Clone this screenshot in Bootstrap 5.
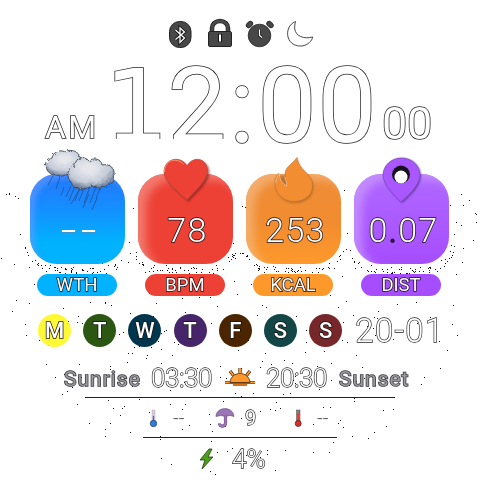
<!DOCTYPE html>
<html lang="en">
<head>
<meta charset="utf-8">
<meta name="viewport" content="width=device-width, initial-scale=1">
<title>Watch face</title>
<link href="https://cdn.jsdelivr.net/npm/bootstrap@5.3.0/dist/css/bootstrap.min.css" rel="stylesheet">
<style>
body{margin:0;background:#fff;font-family:Roboto,sans-serif;overflow:hidden}
.face{width:480px;height:480px;line-height:1;isolation:isolate;opacity:.999;will-change:opacity}
.specks{inset:0;z-index:-1}
svg{display:block;flex:none}
.outl{color:#fff;-webkit-text-stroke:1.5px #222;paint-order:stroke fill;white-space:nowrap}
.status{height:55px;padding:15px 0 0 160px}
.clock{height:93px;padding-left:45px}
.ampm{font-size:32px;width:61px;letter-spacing:2.4px;padding-top:56px;font-weight:400}
.digits{font-size:105px;height:93px;width:272px}
.digits span{display:block;width:60px;line-height:105px;height:105px;margin-top:-1px;text-align:center}
.digits .cut{position:relative}
.digits .cut::after{content:"";position:absolute;left:0;right:0;top:85px;height:4px;background:#fff}
.digits .one{font-family:"DejaVu Sans",sans-serif;font-size:102px;width:61px;text-indent:-2px}
.digits .sep{width:30px}
.secs{font-size:45px;letter-spacing:-.3px;padding-top:46px}
.tiles{padding:26px 0 0 30px;gap:13px;height:154px}
.tile{width:95px}
.tilebody{width:95px;height:90px;border-radius:27px;font-size:34px;font-weight:300;letter-spacing:1.3px;padding:39px 0 0 4px}
.tilebody .outl,.pill .outl{-webkit-text-stroke-color:#1b1014}
.tile svg{top:-29px;left:0;z-index:1}
.pill{width:80px;height:22px;border-radius:11px;margin:10px 0 0 7px;font-size:18.5px}
.wth .tilebody{background:linear-gradient(#2378ff,#168cff 35%,#00b2ff 76%);box-shadow:inset 5px 5px 5px #6699ff99}
.bpm .tilebody{background:#ee4135;box-shadow:inset 8px 6px 9px #f69287b0}
.kcal .tilebody{background:linear-gradient(#ef8c37,#f28c30 55%,#fd992b);box-shadow:inset 8px 6px 9px #f6b77ec0}
.dist .tilebody{background:linear-gradient(#b069ff,#a64dff);box-shadow:inset 8px 6px 9px #ca98ffc0}
.wth .pill{background:#00b2ff}.bpm .pill{background:#ee4135}.kcal .pill{background:#fd992b}.dist .pill{background:#a64dff}
.tilebody .dashes{font-family:"DejaVu Sans",sans-serif;font-size:50px;font-weight:200;letter-spacing:2px;margin-top:-10px;-webkit-text-stroke:1px #6c84a0}
.week{height:57px;padding:0 0 0 38px;gap:12.2px}
.day{width:33px;height:33px;font-size:22px;font-weight:500;border-radius:50%;flex:none}
.day .outl{-webkit-text-stroke-color:#111}
.date{font-size:33px;font-weight:300;letter-spacing:1.3px;margin-left:1px}
.date,.hhmm,.pct,.uv{-webkit-text-stroke-width:1.3px}
.sun{height:38px;padding-left:64px}
.word{font-size:21px;font-weight:400;letter-spacing:1px;color:#9a9aa0;-webkit-text-stroke:1.6px #39393e;paint-order:stroke fill;padding-top:3px}
.hhmm{font-size:26px;font-weight:300;letter-spacing:-.4px}
.rule{height:1px;background:#222;margin:0 auto;flex:none}
.temps{height:39px;padding-left:145px}
.none{font-size:20px;color:#555;font-weight:300}
.uv{font-size:20px}
.batt{height:42px;padding-left:198px}
.pct{font-size:26px;font-weight:300}
</style>
<script src="https://cdn.jsdelivr.net/npm/bootstrap@5.3.0/dist/js/bootstrap.bundle.min.js"></script>
</head>
<body>
<main class="face position-relative d-flex flex-column">
<svg class="specks position-absolute" id="specks" width="480" height="480" shape-rendering="crispEdges"></svg>

<header class="status d-flex">
<svg width="40" height="36" viewBox="160 15 40 36"><rect x="169.5" y="21.5" width="21.500" height="26" rx="10" fill="#484848" stroke="#222"/><path d="M175.500 30l9 8-4.500 4.500V28l4.500 4-9 7.500" fill="none" stroke="#111" stroke-width="3"/><path d="M175.500 30l9 8-4.500 4.500V28l4.500 4-9 7.500" fill="none" stroke="#fff" stroke-width="1.300"/></svg>
<svg width="40" height="36" viewBox="200 15 40 36"><path d="M212 32v-4a8 7 0 0 1 16 0v4" fill="none" stroke="#222" stroke-width="4.500"/><path d="M212 32v-4a8 7 0 0 1 16 0v4" fill="none" stroke="#484848" stroke-width="3"/><rect x="208.500" y="31.500" width="23" height="15" rx="1.500" fill="#484848" stroke="#222"/><path d="M220 34v8" stroke="#111" stroke-width="4"/><path d="M220 34.500v7" stroke="#fff" stroke-width="2"/></svg>
<svg width="40" height="36" viewBox="240 15 40 36"><g fill="#484848" stroke="#222" stroke-width=".8"><ellipse cx="249.500" cy="24.500" rx="3.800" ry="2.600" transform="rotate(-42 249.500 24.500)"/><ellipse cx="270" cy="24.500" rx="3.800" ry="2.600" transform="rotate(42 270 24.500)"/><circle cx="259.500" cy="35.500" r="11.300"/></g><path d="M259.500 29.500v6l2.500 2" fill="none" stroke="#111" stroke-width="3"/><path d="M259.500 29.500v6l2.500 2" fill="none" stroke="#fff" stroke-width="1.300"/></svg>
<svg width="40" height="36" viewBox="280 15 40 36"><path d="M295.500 21.500C289 24 286.500 31 288 37c2 7 8 9.500 14 9 6-1 10-5 10.700-9-9 2.500-17-1-18-8-.2-3 .3-5 .8-7.500z" fill="#fff" stroke="#333" stroke-width=".9"/></svg>
</header>

<section class="clock d-flex align-items-start">
<div class="ampm outl">AM</div>
<div class="digits d-flex outl"><span class="one cut">1</span><span class="cut">2</span><span class="sep">:</span><span>0</span><span>0</span></div>
<div class="secs outl ms-1">00</div>
</section>

<section class="tiles d-flex">
<article class="tile wth position-relative">
<svg class="position-absolute" width="95" height="70" viewBox="30 145 95 70"><defs><radialGradient id="cl" cx=".45" cy=".35" r=".6"><stop offset=".2" stop-color="#e6e7ec"/><stop offset=".75" stop-color="#c3cbd8"/><stop offset="1" stop-color="#7988a0"/></radialGradient><filter id="rough" x="-10%" y="-10%" width="120%" height="120%"><feTurbulence baseFrequency=".16" numOctaves="3" seed="4"/><feDisplacementMap in="SourceGraphic" scale="4"/></filter></defs>
<path d="M53 176l-5 9m12-8l-4 12m8-2l-3 9m10-10l-5 11m10-14l-7 18m12-16l-6 16m11-18l-7 18m13-20l-8 22m15-24l-9 24m14-26l-8 22m12-24l-4 12M79 190l-8 14m18-10l-6 14m14-10l-5 12" fill="none" stroke="#274f8c" stroke-opacity=".75" stroke-width="1"/>
<g filter="url(#rough)" fill="url(#cl)" stroke="#303743" stroke-width=".8" transform="translate(0 -1)"><path d="M51 174c-8-2-7-14 0-16 1-6 8-9 13-6 6-4 15 0 15 6 6 1 7 8 5 11-3 7-13 8-18 5-4 3-10 3-15 0z"/><path d="M70 182c-6-5-3-16 4-16 0-9 9-11 14-5 4-4 13-2 13 4 8-2 13 4 12 9 2 6-1 10-6 10-4 5-12 5-16 2-8 5-19 4-21-4z"/></g></svg>
<div class="tilebody d-flex justify-content-center"><span class="outl dashes">--</span></div>
<div class="pill d-flex align-items-center justify-content-center"><span class="outl">WTH</span></div>
</article>
<article class="tile bpm position-relative">
<svg class="position-absolute" width="95" height="70" viewBox="138 145 95 70"><path d="M187 201c-7-7-22-18-23-28 0-15 17-17 23-6 6-11 22-8 21 6-1 9-14 20-21 28z" fill="#791e19" opacity=".65" transform="translate(1.500 1)" style="filter:blur(1px)"/><path d="M187 200c-7-7-23-18-23-28 0-14 17-17 23-6 6-11 21-8 20.500 6-1 9-13 20-20.500 28z" fill="#ee4135" stroke="#a94b3f" stroke-width=".7"/><path d="M164.500 172c0-12 12-15 19-8" fill="none" stroke="#ffa47c" stroke-width=".8"/></svg>
<div class="tilebody d-flex justify-content-center"><span class="outl">78</span></div>
<div class="pill d-flex align-items-center justify-content-center"><span class="outl">BPM</span></div>
</article>
<article class="tile kcal position-relative">
<svg class="position-absolute" width="95" height="70" viewBox="246 145 95 70"><path d="M297 157.500c1 13 16 16 15.500 28 0 10-8 16-18.500 16-11 0-19-8-19-18 0-6 2-9 4-10l10 1c0-6 3-11 8-17z" fill="#9d5c20" opacity=".6" transform="translate(1 1.500)" style="filter:blur(1px)"/><path d="M297 157.500c1 13 16 16 15.500 28 0 10-8 16-18.500 16-11 0-19-8-19-18 0-6 2-9 4-10 1 6 3 10 7 12 2-3-1-7-1-11 0-8 7-10 12-17z" fill="#f28d31" stroke="#b97032" stroke-width=".6"/><path d="M276 183c0-5 2-8 3.500-9 0 6 3 10 7 12 1-3-1-6-1.500-9" fill="none" stroke="#f8bd86"/></svg>
<div class="tilebody d-flex justify-content-center"><span class="outl">253</span></div>
<div class="pill d-flex align-items-center justify-content-center"><span class="outl">KCAL</span></div>
</article>
<article class="tile dist position-relative">
<svg class="position-absolute" width="95" height="70" viewBox="354 145 95 70"><path d="M401 202c-6-6-18-18-18-27a18 17 0 0 1 37 0c0 10-12 21-19 27z" fill="#4c267c" opacity=".7" transform="translate(1 1)" style="filter:blur(1px)"/><path d="M401 202c-6-6-18-17-18-27a18.500 17 0 0 1 37 0c0 10-12 21-19 27z" fill="#a957ff" stroke="#7547ad" stroke-width=".7"/><circle cx="401" cy="174.500" r="9" fill="#17111e"/><circle cx="401" cy="177" r="6.500" fill="#fff"/></svg>
<div class="tilebody d-flex justify-content-center"><span class="outl">0<span style="color:#33145c">.</span>07</span></div>
<div class="pill d-flex align-items-center justify-content-center"><span class="outl">DIST</span></div>
</article>
</section>

<section class="week d-flex align-items-center">
<div class="day d-flex align-items-center justify-content-center" style="background:#fff935"><span class="outl">M</span></div>
<div class="day d-flex align-items-center justify-content-center" style="background:#2b5713"><span class="outl">T</span></div>
<div class="day d-flex align-items-center justify-content-center" style="background:#00364d"><span class="outl">W</span></div>
<div class="day d-flex align-items-center justify-content-center" style="background:#46256a"><span class="outl">T</span></div>
<div class="day d-flex align-items-center justify-content-center" style="background:#4b2500"><span class="outl">F</span></div>
<div class="day d-flex align-items-center justify-content-center" style="background:#124647"><span class="outl">S</span></div>
<div class="day d-flex align-items-center justify-content-center" style="background:#772629"><span class="outl">S</span></div>
<div class="date outl">20-01</div>
</section>

<section class="sun d-flex align-items-center">
<div class="word" style="width:87px">Sunrise</div>
<div class="hhmm outl" style="width:73px">03:30</div>
<svg width="32" height="24" viewBox="224 366 32 24"><g stroke="#3c2208" stroke-width="3.200"><path d="M225 382.500h30M240 368v5M230 371l3.500 4.500M250 371l-3.500 4.500"/></g><g stroke="#ff982c" stroke-width="2"><path d="M225 382.500h30M240 368v5M230 371l3.500 4.500M250 371l-3.500 4.500"/></g><path d="M230 382.500c1-12 19-12 20 0z" fill="#ff982c" stroke="#3c2208" stroke-width=".8"/><path d="M233 385h14" stroke="#d96e13" stroke-width="2"/></svg>
<div class="hhmm outl" style="width:73px;margin-left:10px">20:30</div>
<div class="word">Sunset</div>
</section>
<div class="rule" style="width:310px"></div>
<section class="temps d-flex align-items-center">
<svg width="16" height="22" viewBox="145 406 16 22"><rect x="152" y="409" width="3" height="14" fill="#dacce0" stroke="#a99aac" stroke-width=".4"/><path d="M153.500 415v8" stroke="#2878dd" stroke-width="1.300"/><circle cx="153.500" cy="422.500" r="3.200" fill="#277fe5" stroke="#25384f" stroke-width=".7"/></svg>
<div class="none" style="width:54px;padding-left:12px">--</div>
<svg width="22" height="22" viewBox="215 406 22 22"><path d="M216 415.500c0-10 17-11 18 0l-4-1-5 1-4-1z" fill="#9b75b6" stroke="#4a3658" stroke-width=".5"/><path d="M225.500 414v8c0 4-6 4-6 .5" fill="none" stroke="#6f4d8a" stroke-width="3.200"/><path d="M225.500 414v8c0 4-6 4-6 .5" fill="none" stroke="#9b75b6" stroke-width="2.200"/></svg>
<div class="uv outl" style="width:53px;padding-left:8px">9</div>
<svg width="16" height="22" viewBox="290 406 16 22"><rect x="296.500" y="409" width="3.500" height="14" fill="#8e7a80" stroke="#55474c" stroke-width=".5"/><path d="M298.200 412v10" stroke="#e93c32" stroke-width="2"/><circle cx="298.200" cy="422.500" r="3" fill="#d72f2b" stroke="#501d1d" stroke-width=".7"/></svg>
<div class="none" style="padding-left:11px">--</div>
</section>
<div class="rule" style="width:194px"></div>
<section class="batt d-flex align-items-center">
<svg width="34" height="24" viewBox="198 445 34 24"><path d="M209 447l-9 11h5l-3 9 11-12h-5l4-8z" fill="#4ba01b" stroke="#1c3d0b" stroke-width=".8"/></svg>
<div class="pct outl">4%</div>
</section>
</main>
<script>
// Dithered halo: sparse single-pixel specks, denser under the tiles.
let seed = 977;
const rnd = () => (seed = (seed * 16807) % 2147483647) / 2147483647;
let d = '';
const put = (x, y) => { d += `M${x | 0} ${y | 0}h1v1h-1z`; };
for (let i = 0; i < 470; i++) {
  const x = rnd() * 480, y = 190 + rnd() * 288, r = Math.hypot(x - 240, y - 236);
  if (r < 241) put(x, y);
}
for (let c = 0; c < 4; c++) for (let i = 0; i < 60; i++) {
  // follows the rounded lower edge of each tile
  const t = rnd() * 2 - 1, x = 77.5 + c * 108 + t * 53;
  put(x, 267 - 22 * t * t * t * t + rnd() * 9);
}
document.getElementById('specks').innerHTML = `<path d="${d}" fill="#111"/>`;
</script>
</body>
</html>
